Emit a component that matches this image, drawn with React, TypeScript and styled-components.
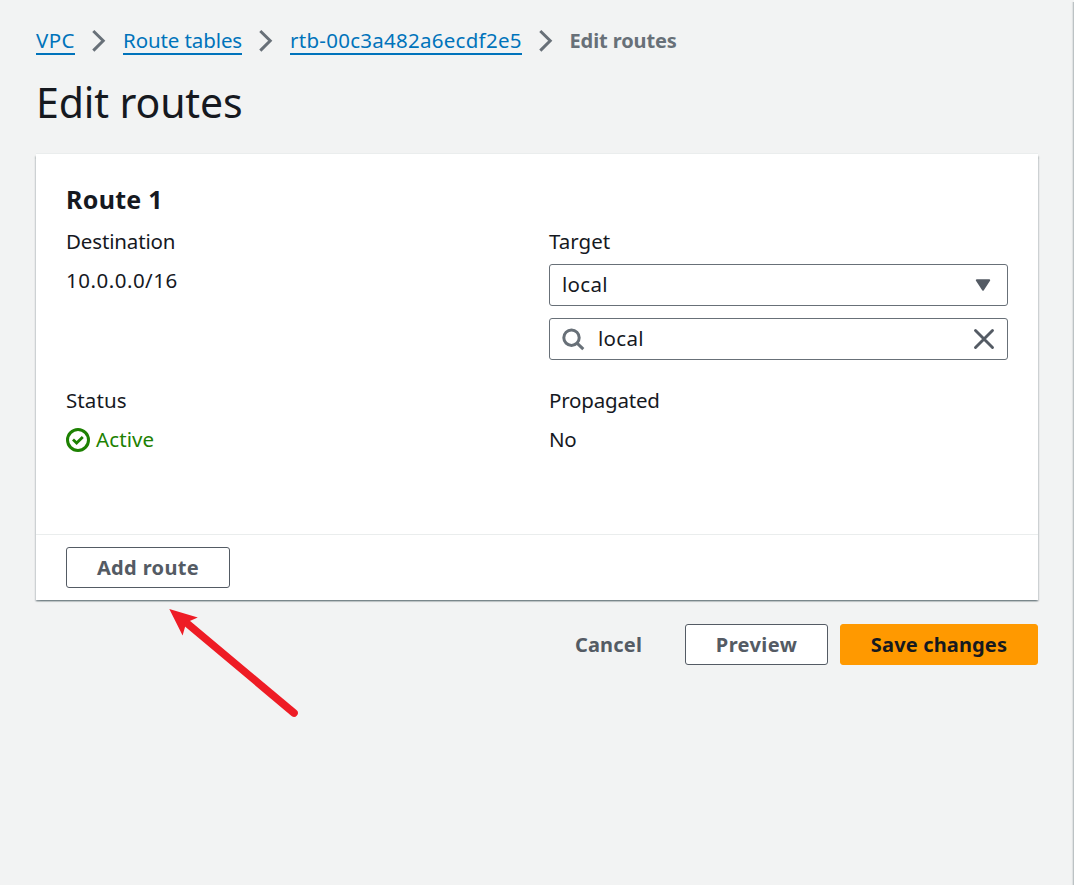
import React from "react";
import styled, { createGlobalStyle } from "styled-components";

const GlobalStyle = createGlobalStyle`
  *, *::before, *::after { box-sizing: border-box; }
  body {
    margin: 0;
    background: #f2f3f3;
    color: #16191f;
    font: 400 20.5px/30px "Noto Sans", "Open Sans", sans-serif;
  }
  h1, h2, dl, dt, dd { margin: 0; padding: 0; }
  button { font: inherit; color: inherit; }
`;

const Page = styled.main`
  position: relative;
  height: 885px;
  padding: 25px 36px 0;
  overflow: hidden;
`;

const PanelEdge = styled.div`
  position: absolute;
  top: 2px;
  right: 0;
  bottom: 0;
  width: 1px;
  background: #bcc2c4;
  box-shadow: -1px 0 1px rgba(0, 28, 36, 0.1);
`;

const Text = styled.span<{ $tracking?: number }>`
  letter-spacing: ${(p) => p.$tracking ?? 0}px;
  white-space: nowrap;
`;

const Breadcrumbs = styled.nav`
  display: flex;
  align-items: center;
  gap: 12px;
  height: 30px;
`;

const Crumb = styled.a<{ $width: number; $tracking: number }>`
  width: ${(p) => p.$width}px;
  height: 30px;
  color: #0073bb;
  letter-spacing: ${(p) => p.$tracking}px;
  white-space: nowrap;
  text-decoration: none;
  box-shadow: inset 0 -2px #0073bb;
`;

const CurrentCrumb = styled.span`
  height: 30px;
  color: #687078;
  font-size: 20px;
  font-weight: 700;
  line-height: 32px;
  letter-spacing: -0.1px;
  text-indent: -0.5px;
`;

const Icon = styled.svg`
  flex: none;
  width: 24px;
  height: 24px;
  fill: none;
  stroke: currentColor;
  stroke-width: 3;
`;

const CrumbIcon = styled(Icon)`
  color: #687078;
`;

const Title = styled.h1`
  height: 48px;
  margin-top: 22px;
  font-size: 41px;
  font-weight: 400;
  line-height: 50px;
  letter-spacing: -0.12px;
`;

const Card = styled.section`
  width: 1002px;
  margin-top: 29px;
  background: #fff;
  box-shadow:
    0 -1px 0 #eaeded,
    0 1.5px 1.5px 0 rgba(0, 28, 36, 0.3),
    1px 1.5px 1.5px 0 rgba(0, 28, 36, 0.15),
    -1px 1.5px 1.5px 0 rgba(0, 28, 36, 0.15);
`;

const CardBody = styled.div`
  height: 380px;
  padding: 30px 30px 0;
`;

const CardHeading = styled.h2`
  margin-bottom: 12px;
  font-size: 25px;
  font-weight: 700;
  line-height: 30px;
  letter-spacing: 0.3px;
`;

const Fields = styled.dl`
  display: grid;
  grid-template-columns: 459px 459px;
  gap: 25px 24px;
`;

const Field = styled.div<{ $gap?: number }>`
  display: flex;
  flex-direction: column;
  gap: ${(p) => p.$gap ?? 9}px;
`;

const Label = styled.dt`
  height: 30px;
`;

const Value = styled.dd`
  height: 30px;
`;

const Controls = styled.dd`
  display: flex;
  flex-direction: column;
  gap: 12px;
`;

const ControlBox = styled.div`
  display: flex;
  align-items: center;
  justify-content: space-between;
  height: 42px;
  padding: 0 12px 0 11px;
  border: 1px solid #687078;
  border-radius: 3px;
  background: #fff;
`;

const ControlValue = styled.span`
  display: flex;
  align-items: center;
  gap: 13px;
  height: 38px;
  padding-left: 1px;
`;

const ControlText = styled.span`
  height: 30px;
  line-height: 28px;
  letter-spacing: 0.3px;
`;

const SearchIcon = styled(Icon)`
  margin-left: -1px;
  color: #687078;
`;

const ControlIcon = styled(Icon)`
  color: #545b64;
`;

const StatusValue = styled(Value)`
  display: flex;
  gap: 6px;
  color: #1d8102;
`;

const StatusIcon = styled(Icon)`
  margin-top: 4px;
`;

const CardFooter = styled.footer`
  display: flex;
  height: 66px;
  padding: 12px 30px;
  border-top: 1px solid #eaeded;
`;

const Button = styled.button<{ $width: number; $kind?: "normal" | "primary" | "link" }>`
  display: flex;
  align-items: center;
  justify-content: center;
  width: ${(p) => p.$width}px;
  height: 41px;
  padding: 0;
  border: 1px solid
    ${(p) => (p.$kind === "primary" ? "#ff9900" : p.$kind === "link" ? "transparent" : "#545b64")};
  border-radius: 3px;
  background: ${(p) => (p.$kind === "primary" ? "#ff9900" : p.$kind === "link" ? "transparent" : "#fff")};
  color: ${(p) => (p.$kind === "primary" ? "#16191f" : "#545b64")};
  font-size: 20px;
  font-weight: 700;
`;

const Actions = styled.div`
  display: flex;
  justify-content: flex-end;
  gap: 12px;
  width: 1002px;
  margin-top: 24px;
`;

const Arrow = styled.svg`
  position: absolute;
  left: 160px;
  top: 600px;
  width: 150px;
  height: 130px;
  fill: #ee1c25;
  stroke: #ee1c25;
`;

const ChevronRight = () => (
  <CrumbIcon viewBox="0 0 24 24">
    <path d="M6.3 3 16.2 12.8 6.3 22.6" />
  </CrumbIcon>
);

export default function App() {
  return (
    <Page>
      <GlobalStyle />
      <Breadcrumbs>
        <Crumb $width={39} $tracking={0.4}>VPC</Crumb>
        <ChevronRight />
        <Crumb $width={119} $tracking={-0.1}>Route tables</Crumb>
        <ChevronRight />
        <Crumb $width={232} $tracking={0.27}>rtb-00c3a482a6ecdf2e5</Crumb>
        <ChevronRight />
        <CurrentCrumb>Edit routes</CurrentCrumb>
      </Breadcrumbs>
      <Title>Edit routes</Title>
      <Card>
        <CardBody>
          <CardHeading>Route 1</CardHeading>
          <Fields>
            <Field>
              <Label><Text $tracking={-0.15}>Destination</Text></Label>
              <Value><Text $tracking={0.5}>10.0.0.0/16</Text></Value>
            </Field>
            <Field $gap={8}>
              <Label><Text>Target</Text></Label>
              <Controls>
                <ControlBox>
                  <ControlValue><ControlText>local</ControlText></ControlValue>
                  <ControlIcon viewBox="0 0 24 24">
                    <path
                      d="M5.8 7.3h12.4L12 16.6Z"
                      fill="currentColor"
                      strokeWidth="2"
                      strokeLinejoin="round"
                    />
                  </ControlIcon>
                </ControlBox>
                <ControlBox>
                  <ControlValue>
                    <SearchIcon viewBox="0 0 24 24">
                      <circle cx="10.5" cy="10.7" r="7.7" />
                      <path d="m16 16.2 6.3 6" />
                    </SearchIcon>
                    <ControlText>local</ControlText>
                  </ControlValue>
                  <ControlIcon viewBox="0 0 24 24">
                    <path d="m4.5 3.5 17 17M21.5 3.5l-17 17" strokeWidth="2.9" strokeLinecap="round" />
                  </ControlIcon>
                </ControlBox>
              </Controls>
            </Field>
            <Field>
              <Label><Text $tracking={0.1}>Status</Text></Label>
              <StatusValue>
                <StatusIcon viewBox="0 0 24 24">
                  <circle cx="12" cy="12" r="10.5" />
                  <path d="m7 11.6 3.6 3.5 6.2-6.2" strokeWidth="2.8" />
                </StatusIcon>
                <Text $tracking={0.1}>Active</Text>
              </StatusValue>
            </Field>
            <Field>
              <Label><Text $tracking={-0.2}>Propagated</Text></Label>
              <Value><Text $tracking={-0.3}>No</Text></Value>
            </Field>
          </Fields>
        </CardBody>
        <CardFooter>
          <Button $width={164}><Text $tracking={0.35}>Add route</Text></Button>
        </CardFooter>
      </Card>
      <Actions>
        <Button $width={129} $kind="link"><Text $tracking={0.2}>Cancel</Text></Button>
        <Button $width={143}><Text $tracking={0.4}>Preview</Text></Button>
        <Button $width={198} $kind="primary"><Text $tracking={0.15}>Save changes</Text></Button>
      </Actions>
      <PanelEdge />
      <Arrow viewBox="0 0 150 130">
        <path d="m9.3 9 28.5 8.4-11.5 5.2-3.7 13Z" stroke="none" />
        <path d="M28 24.2 134 113" strokeWidth="7.6" strokeLinecap="round" />
      </Arrow>
    </Page>
  );
}
